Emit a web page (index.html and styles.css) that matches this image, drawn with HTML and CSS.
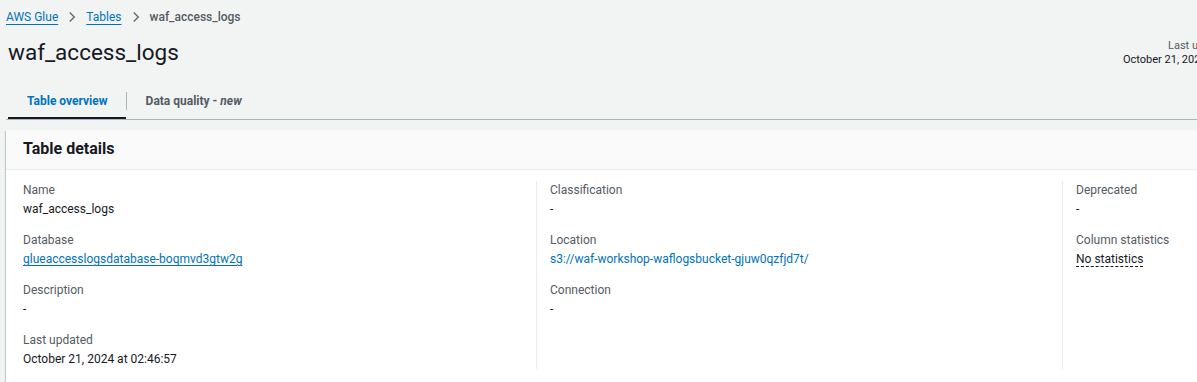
FILE: index.html
```html
<!DOCTYPE html>
<html lang="en">
<head>
  <meta charset="UTF-8" />
  <title>waf_access_logs | AWS Glue</title>
  <link rel="stylesheet" href="styles.css">
</head>
<body>
  <div class="page">
    <nav class="crumbs">
      <a href="#">AWS Glue</a>
      <svg class="chev" viewBox="0 0 16 16"><path d="M5 2l6 6-6 6" /></svg>
      <a href="#">Tables</a>
      <svg class="chev" viewBox="0 0 16 16"><path d="M5 2l6 6-6 6" /></svg>
      <span class="current">waf_access_logs</span>
    </nav>

    <div class="head">
      <h1>waf_access_logs</h1>
      <div class="updated">
        <div class="upd-label">Last updated</div>
        <div class="upd-value">October 21, 2024 at 02:46:57</div>
      </div>
    </div>

    <div class="tabs">
      <a class="tab active" href="#">Table overview</a>
      <span class="tab-sep"></span>
      <a class="tab" href="#">Data quality - <em>new</em></a>
    </div>

    <div class="card">
      <div class="card-head"><h2>Table details</h2></div>
      <div class="cols">
        <div class="col">
          <div class="field">
            <div class="label">Name</div>
            <div class="value">waf_access_logs</div>
          </div>
          <div class="field">
            <div class="label">Database</div>
            <div class="value"><a class="ul" href="#">glueaccesslogsdatabase-boqmvd3gtw2g</a></div>
          </div>
          <div class="field">
            <div class="label">Description</div>
            <div class="value">-</div>
          </div>
          <div class="field">
            <div class="label">Last updated</div>
            <div class="value">October 21, 2024 at 02:46:57</div>
          </div>
        </div>
        <div class="col">
          <div class="field">
            <div class="label">Classification</div>
            <div class="value">-</div>
          </div>
          <div class="field">
            <div class="label">Location</div>
            <div class="value"><a href="#">s3://waf-workshop-waflogsbucket-gjuw0qzfjd7t/</a></div>
          </div>
          <div class="field">
            <div class="label">Connection</div>
            <div class="value">-</div>
          </div>
        </div>
        <div class="col">
          <div class="field">
            <div class="label">Deprecated</div>
            <div class="value">-</div>
          </div>
          <div class="field">
            <div class="label">Column statistics</div>
            <div class="value"><span class="dotted">No statistics</span></div>
          </div>
        </div>
      </div>
    </div>
  </div>
</body>
</html>
```

FILE: styles.css
```css
html, body { margin: 0; padding: 0; overflow: hidden; }
body { font-family: Roboto, "Open Sans", Arial, sans-serif; font-size: 12px; color: #16191f; background: #f2f3f3; }
a { color: #0073bb; text-decoration: none; }

.page { width: 1600px; padding: 7px 0 0 6px; }

.crumbs { display: flex; align-items: center; height: 20px; }
.crumbs a { text-decoration: underline; text-underline-offset: 3px; }
.crumbs .current { color: #545b64; font-weight: 500; }
.chev { width: 12px; height: 12px; margin: 0 8px; fill: none; stroke: #687078; stroke-width: 2; }

.head { display: flex; justify-content: space-between; align-items: flex-start; margin-top: 8px; }
h1 { margin: 0 0 0 2px; font-size: 22.5px; font-weight: 400; line-height: 34px; }
.updated { text-align: right; font-size: 11px; color: #545b64; line-height: 14px; margin-top: 4px; margin-right: 342px; }
.upd-label { padding-right: 32px; }
.upd-value { color: #16191f; }

.tabs { display: flex; align-items: center; margin-top: 17px; border-bottom: 1px solid #aab7b8; height: 34px; box-sizing: border-box; }
.tab { font-weight: 700; color: #545b64; padding: 0 19px; height: 33px; line-height: 30px; box-sizing: border-box; }
.tab em { font-weight: 700; }
.tab.active { color: #0073bb; border-bottom: 2px solid #16191f; margin-left: 2px; padding: 0 18px 0 19px; }
.tab-sep { width: 1px; height: 18px; background: #aab7b8; margin-top: -4px; }

.card { margin-top: 10px; background: #fff; box-shadow: 0 1px 1px 0 rgba(0,28,36,0.3), 1px 1px 1px 0 rgba(0,28,36,0.15), -1px 1px 1px 0 rgba(0,28,36,0.15); }
.card-head { background: #fafafa; border-bottom: 1px solid #eaeded; padding: 8px 17px 10px; }
h2 { margin: 0; font-size: 16px; font-weight: 700; line-height: 21px; }

.cols { display: grid; grid-template-columns: 530px 526px 526px; padding: 11px 0 13px; }
.col { padding: 0 16px 0 13px; border-left: 1px solid #eaeded; }
.col:first-child { border-left: none; padding-left: 17px; }
.field { margin-bottom: 12px; }
.field:last-child { margin-bottom: 0; }
.label { color: #545b64; line-height: 18px; }
.value { line-height: 20px; }
.value a.ul { text-decoration: underline; text-underline-offset: 2px; }
.dotted { border-bottom: 1px dashed #16191f; }
```
